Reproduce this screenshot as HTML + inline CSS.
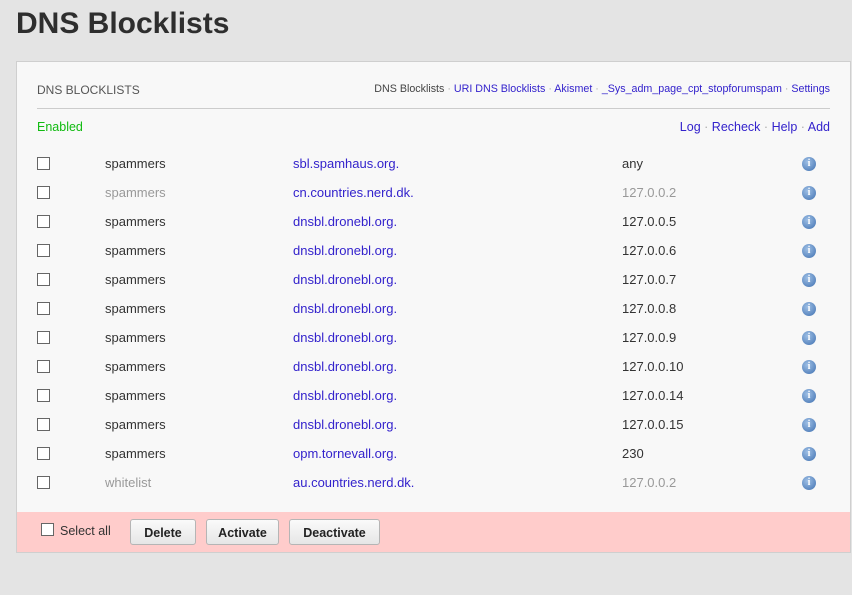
<!DOCTYPE html>
<html><head><style>
body{margin:0;width:852px;height:595px;background:#e4e4e4;font-family:"Liberation Sans",sans-serif;position:relative;overflow:hidden}
.a{position:absolute;white-space:nowrap}
h1{position:absolute;left:16px;top:7px;margin:0;font-size:30px;font-weight:bold;color:#2e2e2e}
.panel{position:absolute;left:16px;top:61px;width:833px;height:490px;background:#f8f8f8;border:1px solid #cfcfcf}
.cb{position:absolute;width:11px;height:11px;border:1px solid #666;background:#fff}
a{color:#3322cc;text-decoration:none}
.dot{color:#aaa}
.row{font-size:13px;color:#333}
.g{color:#999}
.info{position:absolute;width:14px;height:14px;border-radius:50%;background:radial-gradient(circle at 40% 35%,#9fc0e6,#3f70b0);color:#fff;font:bold 10px "Liberation Serif",serif;text-align:center;line-height:14px}
.foot{position:absolute;left:0;top:450px;width:833px;height:40px;background:#ffcccb}
.btn{position:absolute;top:7px;height:24px;border:1px solid #b5b5b5;border-radius:3px;background:linear-gradient(#fafafa,#e6e6e6);font:bold 12.5px "Liberation Sans",sans-serif;color:#222;text-align:center;line-height:26px}
</style></head><body>
<h1>DNS Blocklists</h1>
<div class="panel">
<div class="a" style="left:20px;top:21px;font-size:12px;color:#555">DNS BLOCKLISTS</div>
<div class="a" style="right:20px;top:21px;font-size:10.7px;color:#444">DNS Blocklists <span class="dot">·</span> <a>URI DNS Blocklists</a> <span class="dot">·</span> <a>Akismet</a> <span class="dot">·</span> <a>_Sys_adm_page_cpt_stopforumspam</a> <span class="dot">·</span> <a>Settings</a></div>
<div class="a" style="left:20px;top:46px;width:793px;border-top:1px solid #ccc"></div>
<div class="a" style="left:20px;top:58px;font-size:12.5px;color:#11bb11">Enabled</div>
<div class="a" style="right:20px;top:58px;font-size:12.5px"><a>Log</a> <span class="dot">·</span> <a>Recheck</a> <span class="dot">·</span> <a>Help</a> <span class="dot">·</span> <a>Add</a></div>
<div id="rows"></div>
<div class="foot">
<div class="cb" style="left:24px;top:11px"></div>
<div class="a" style="left:43px;top:12px;font-size:12.5px;color:#333">Select all</div>
<div class="btn" style="left:113px;width:64px">Delete</div>
<div class="btn" style="left:189px;width:71px">Activate</div>
<div class="btn" style="left:272px;width:89px">Deactivate</div>
</div>
</div>
<script>
var d=[["spammers","sbl.spamhaus.org.","any",0],["spammers","cn.countries.nerd.dk.","127.0.0.2",1],["spammers","dnsbl.dronebl.org.","127.0.0.5",0],["spammers","dnsbl.dronebl.org.","127.0.0.6",0],["spammers","dnsbl.dronebl.org.","127.0.0.7",0],["spammers","dnsbl.dronebl.org.","127.0.0.8",0],["spammers","dnsbl.dronebl.org.","127.0.0.9",0],["spammers","dnsbl.dronebl.org.","127.0.0.10",0],["spammers","dnsbl.dronebl.org.","127.0.0.14",0],["spammers","dnsbl.dronebl.org.","127.0.0.15",0],["spammers","opm.tornevall.org.","230",0],["whitelist","au.countries.nerd.dk.","127.0.0.2",1]];
var h="";d.forEach(function(r,i){var y=95+i*29;var c=r[3]?' g':'';
h+='<div class="cb" style="left:20px;top:'+y+'px"></div><div class="a row'+c+'" style="left:88px;top:'+(y-1)+'px">'+r[0]+'</div><div class="a row" style="left:276px;top:'+(y-1)+'px"><a>'+r[1]+'</a></div><div class="a row'+c+'" style="left:605px;top:'+(y-1)+'px">'+r[2]+'</div><div class="info" style="left:785px;top:'+y+'px">i</div>';});
document.getElementById("rows").innerHTML=h;
</script>
</body></html>
